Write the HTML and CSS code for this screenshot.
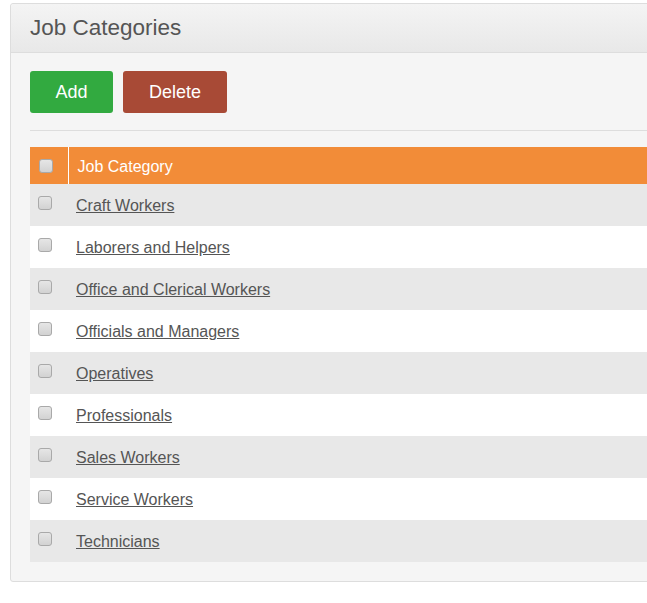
FILE: index.html
```html
<!DOCTYPE html>
<html>
<head>
<meta charset="utf-8">
<link rel="stylesheet" href="styles.css">
</head>
<body>
<div class="panel">
  <div class="panel-head"><h1 class="title">Job Categories</h1></div>
  <div class="panel-body">
    <div class="actions">
      <button class="btn btn-add">Add</button>
      <button class="btn btn-delete">Delete</button>
    </div>
    <div class="divider"></div>
    <table class="grid">
      <thead>
        <tr><th class="c-check"><input type="checkbox" class="cb"></th><th class="c-name">Job Category</th></tr>
      </thead>
      <tbody>
        <tr><td class="c-check"><input type="checkbox" class="cb"></td><td class="c-name"><a href="#">Craft Workers</a></td></tr>
        <tr><td class="c-check"><input type="checkbox" class="cb"></td><td class="c-name"><a href="#">Laborers and Helpers</a></td></tr>
        <tr><td class="c-check"><input type="checkbox" class="cb"></td><td class="c-name"><a href="#">Office and Clerical Workers</a></td></tr>
        <tr><td class="c-check"><input type="checkbox" class="cb"></td><td class="c-name"><a href="#">Officials and Managers</a></td></tr>
        <tr><td class="c-check"><input type="checkbox" class="cb"></td><td class="c-name"><a href="#">Operatives</a></td></tr>
        <tr><td class="c-check"><input type="checkbox" class="cb"></td><td class="c-name"><a href="#">Professionals</a></td></tr>
        <tr><td class="c-check"><input type="checkbox" class="cb"></td><td class="c-name"><a href="#">Sales Workers</a></td></tr>
        <tr><td class="c-check"><input type="checkbox" class="cb"></td><td class="c-name"><a href="#">Service Workers</a></td></tr>
        <tr><td class="c-check"><input type="checkbox" class="cb"></td><td class="c-name"><a href="#">Technicians</a></td></tr>
      </tbody>
    </table>
  </div>
</div>
</body>
</html>
```

FILE: styles.css
```css
html, body {
  margin: 0;
  padding: 0;
  background: #ffffff;
  overflow: hidden;
  font-family: "Liberation Sans", Arial, sans-serif;
}

.panel {
  margin: 3px 0 0 10px;
  width: 700px;
  border: 1px solid #dddddd;
  border-radius: 3px;
  background: #f5f5f5;
}

.panel-head {
  height: 48px;
  padding-left: 19px;
  border-bottom: 1px solid #dddddd;
  background: linear-gradient(to bottom, #f4f4f4, #e8e8e8);
  border-radius: 3px 3px 0 0;
}

.title {
  margin: 0;
  font-size: 22.5px;
  font-weight: normal;
  line-height: 48px;
  color: #555555;
}

.panel-body {
  padding: 18px 19px 19px 19px;
}

.actions {
  display: flex;
  gap: 10px;
}

.btn {
  height: 42px;
  border: none;
  border-radius: 3px;
  color: #ffffff;
  font-family: "Liberation Sans", Arial, sans-serif;
  font-size: 18px;
  padding: 0 25px;
  cursor: pointer;
}

.btn-add {
  width: 83px;
  background: #32aa40;
}

.btn-delete {
  width: 104px;
  background: #a84a36;
}

.divider {
  margin-top: 17px;
  height: 1px;
  background: #dddddd;
  margin-bottom: 16px;
}

.grid {
  width: 100%;
  border-collapse: collapse;
  font-size: 16px;
}

.grid th {
  box-sizing: border-box;
  height: 37px;
  background: #f28c38;
  color: #ffffff;
  font-weight: normal;
  text-align: left;
  padding: 0;
  vertical-align: middle;
}

.grid th.c-check {
  width: 38px;
  border-right: 1px solid #ffffff;
  padding-left: 9px;
}

.grid th.c-name {
  padding-left: 9px;
  padding-top: 3px;
}

.grid td {
  box-sizing: border-box;
  height: 42px;
  padding: 0;
  vertical-align: middle;
}

.grid td.c-check {
  padding-left: 8px;
}

.grid td.c-name {
  padding-left: 8px;
  padding-top: 2px;
}

.grid tbody tr:nth-child(odd) {
  background: #e8e8e8;
}

.grid tbody tr:nth-child(even) {
  background: #ffffff;
}

.grid a {
  color: #555555;
  text-decoration: underline;
}

.cb {
  appearance: none;
  -webkit-appearance: none;
  display: block;
  margin: 0;
  width: 14px;
  height: 14px;
  border: 1px solid #a9a9a9;
  border-radius: 3px;
  background: linear-gradient(to bottom, #e6e6e6, #d2d2d2);
  box-sizing: border-box;
}

.grid td .cb {
  position: relative;
  top: -2px;
}
```
